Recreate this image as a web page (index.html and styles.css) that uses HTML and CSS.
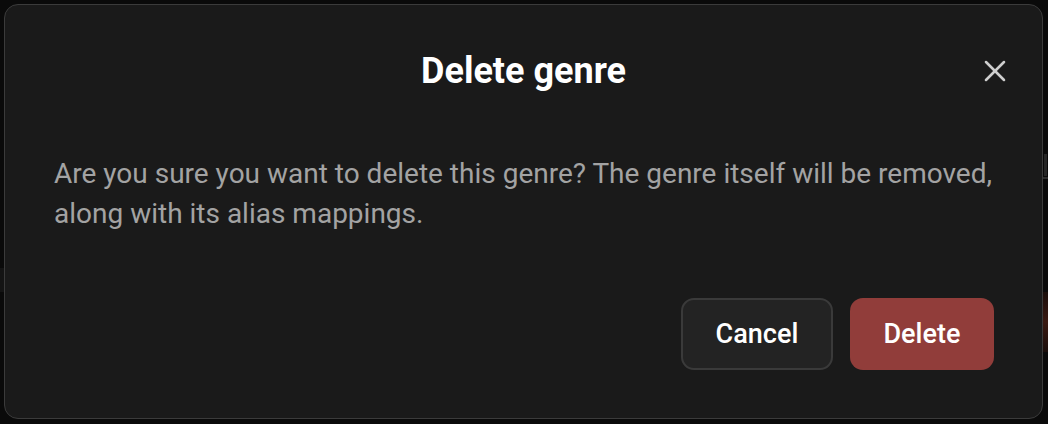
FILE: index.html
```html
<!DOCTYPE html>
<html lang="en">
<head>
<meta charset="utf-8">
<title>Delete genre</title>
<link rel="stylesheet" href="styles.css">
</head>
<body>
<div class="backdrop">
  <div class="peek peek-a"></div>
  <div class="peek peek-b"></div>
  <div class="peek peek-c"></div>
  <div class="peek peek-d"></div>
</div>
<div class="dialog" role="dialog" aria-labelledby="dlg-title">
  <div class="dialog-header">
    <span class="spacer"></span>
    <h2 id="dlg-title" class="dialog-title">Delete genre</h2>
    <button class="close-btn" aria-label="Close">
      <svg width="36" height="36" viewBox="0 0 24 24" fill="none" stroke="currentColor" stroke-width="1.7" stroke-linecap="round" stroke-linejoin="round"><path d="M18 6 6 18"/><path d="m6 6 12 12"/></svg>
    </button>
  </div>
  <p class="dialog-text">Are you sure you want to delete this genre? The genre itself will be removed, along with its alias mappings.</p>
  <div class="dialog-footer">
    <button class="btn btn-cancel">Cancel</button>
    <button class="btn btn-delete">Delete</button>
  </div>
</div>
</body>
</html>
```
FILE: styles.css
```css
* { box-sizing: border-box; }
html, body { margin: 0; padding: 0; }
body {
  width: 1048px;
  height: 424px;
  background: #0a0a0a;
  font-family: Roboto, "Liberation Sans", sans-serif;
  overflow: hidden;
  position: relative;
  padding: 4px;
}
.backdrop { position: absolute; inset: 0; }
.peek { position: absolute; }
.peek-a { left: 1044px; top: 154px; width: 3px; height: 22px; background: #262626; }
.peek-b { left: 1043px; top: 177px; width: 5px; height: 2px; background: #2e2e2e; }
.peek-c { left: 1043px; top: 292px; width: 5px; height: 60px; background: linear-gradient(#1a0e0b, #3a1a12 50%, #1a0e0b); }
.peek-d { left: 0; top: 268px; width: 4px; height: 24px; background: #141414; }

.dialog {
  position: relative;
  width: 1039px;
  height: 415px;
  background: #1a1a1a;
  border: 1px solid #3b3b3b;
  border-radius: 14px;
  padding: 44px 48px 48px;
  display: flex;
  flex-direction: column;
}
.dialog-header {
  display: grid;
  grid-template-columns: 1fr auto 1fr;
  align-items: center;
  height: 44px;
}
.dialog-title {
  margin: 0;
  font-size: 36px;
  line-height: 44px;
  font-weight: 700;
  color: #ffffff;
  text-align: center;
}
.close-btn {
  justify-self: end;
  margin-right: -19px;
  width: 36px;
  height: 36px;
  padding: 0;
  border: 0;
  background: transparent;
  color: #cfcfcf;
  display: flex;
  align-items: center;
  justify-content: center;
}
.close-btn svg { display: block; }
.dialog-text {
  margin: 61px 0 0 1px;
  font-size: 28px;
  line-height: 40px;
  color: #a3a3a3;
}
.dialog-footer {
  margin-top: auto;
  display: flex;
  justify-content: flex-end;
  gap: 17px;
}
.btn {
  height: 72px;
  border-radius: 13px;
  font-family: "Roboto Medium", Roboto, "Liberation Sans", sans-serif;
  font-size: 27px;
  font-weight: 500;
  color: #ffffff;
  padding: 0;
}
.btn-cancel {
  width: 152px;
  background: #232323;
  border: 2px solid #3a3a3a;
}
.btn-delete {
  width: 144px;
  background: #913d3a;
  border: 0;
}
```
